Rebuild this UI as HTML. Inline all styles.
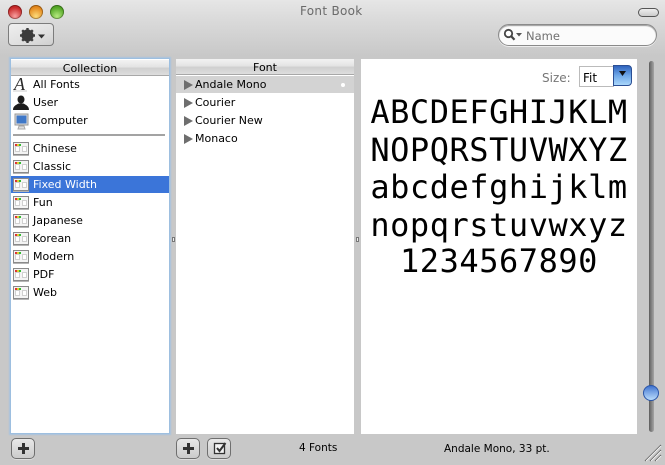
<!DOCTYPE html>
<html><head><meta charset="utf-8">
<style>
html{margin:0;padding:0;background:#c8c8c8}
body{margin:0;padding:0;position:relative;width:665px;height:465px;overflow:hidden;font-family:"DejaVu Sans","Liberation Sans",sans-serif;font-size:11px;color:#000;background:linear-gradient(#e6e6e6 0,#dadada 20px,#c8c8c8 56px,#c8c8c8 100%)}
.a{position:absolute}
.t{position:absolute;white-space:nowrap;line-height:14px}
.light{position:absolute;top:5px;width:14px;height:14px;border-radius:50%;box-shadow:inset 0 0 0 1px rgba(0,0,0,.3)}
.hd{position:absolute;height:15px;background:linear-gradient(#f2f2f2 0,#e4e4e4 45%,#cfcfcf 55%,#dedede 100%);border-bottom:1px solid #a8a8a8;text-align:center;line-height:17px;font-size:11px}
.btn{position:absolute;box-sizing:border-box;width:24px;height:21px;border:1px solid #6f6f6f;border-radius:5px;background:linear-gradient(#e8e8e8,#cbcbcb);box-shadow:0 1px 0 #ddd}
.row{position:absolute;left:33px;white-space:nowrap;line-height:14px}
.ic{position:absolute;left:13px;width:16px;height:13px;box-sizing:border-box;background:#f4f4f4;border:1px solid #8a8a8a;box-shadow:0 1px 0 #b5b5b5}
.ic i{position:absolute;top:1px;width:1.500px;height:1.500px}
.ic b{position:absolute;top:3px;width:3px;height:4px;background:#fff;border:1px solid #d0d0d0;box-sizing:content-box}
.tri{position:absolute;left:184px;width:0;height:0;border-left:9px solid #6e6e6e;border-top:5px solid transparent;border-bottom:5px solid transparent}
.s{position:absolute;left:361px;width:276px;text-align:center;font-family:"DejaVu Sans Mono","Liberation Mono",monospace;font-size:32px;line-height:38px;white-space:nowrap;letter-spacing:.53px}
</style></head><body>
<div class="light" style="left:8px;background:radial-gradient(circle at 50% 80%,#f8a0a0,#c92a2a 65%,#a81c1c)"></div>
<div class="light" style="left:29px;background:radial-gradient(circle at 50% 80%,#fcdb7a,#e58a1e 65%,#c46c10)"></div>
<div class="light" style="left:50px;background:radial-gradient(circle at 50% 80%,#b6ea80,#55a827 65%,#3f8a1a)"></div>
<div class="t" style="left:300px;top:4px;color:#6a6a6a;font-size:12px;letter-spacing:.3px">Font Book</div>
<div class="a" style="left:638px;top:8px;width:19px;height:7px;border:1px solid #555;border-radius:5px;background:linear-gradient(#eee,#ccc)"></div>

<div class="a" style="left:8px;top:23px;width:46px;height:23px;box-sizing:border-box;border:1px solid #7c7c7c;border-radius:4px;background:linear-gradient(160deg,#efefef 0,#e0e0e0 60%,#cfcfcf 100%)"></div>
<svg class="a" style="left:19px;top:27px" width="30" height="17" viewBox="0 0 30 17">
<circle cx="8.500" cy="8.500" r="4.500" fill="none" stroke="#3c3c3c" stroke-width="3.200"/>
<path d="M8.500 1v15M1 8.500h15M3.200 3.200l10.600 10.600M13.800 3.200L3.200 13.800" stroke="#3c3c3c" stroke-width="2.400"/>
<path d="M19 7.500h7l-3.500 4z" fill="#333"/></svg>

<div class="a" style="left:498px;top:24px;width:159px;height:22px;box-sizing:border-box;border-radius:11px;background:#fbfbfb;border:1px solid #8a8a8a;box-shadow:inset 0 1px 1px #999,0 1px 0 #eee"></div>
<svg class="a" style="left:503px;top:28px" width="20" height="14" viewBox="0 0 20 14">
<circle cx="5.500" cy="5.500" r="3.700" fill="#fff" stroke="#444" stroke-width="1.800"/>
<path d="M8 8l3.500 3.800" stroke="#444" stroke-width="2.200"/><path d="M13 5h6l-3 3.500z" fill="#555"/></svg>
<div class="t" style="left:526px;top:29px;color:#707070;font-size:11.500px">Name</div>

<!-- collection -->
<div class="a" style="left:10px;top:58px;width:160px;height:376px;box-sizing:border-box;background:#fff;border:1px solid #9dbfe0;box-shadow:0 0 1px 1px #a9c3de"></div>
<div class="hd" style="left:11px;top:60px;width:158px">Collection</div>
<svg class="a" style="left:12px;top:76px" width="19" height="17" viewBox="0 0 19 17"><text x="2" y="14" font-family="Liberation Serif,serif" font-style="italic" font-size="18" fill="#2a2a2a">A</text><path d="M1 15h14" stroke="#ccc"/></svg>
<div class="row" style="top:78px">All Fonts</div>
<svg class="a" style="left:13px;top:95px" width="16" height="15" viewBox="0 0 16 15"><ellipse cx="8" cy="4.500" rx="3.500" ry="4" fill="#1c1c1c"/><path d="M0 15c0-4 3-5 5.500-6.500h5C13 10 16 11 16 15z" fill="#1c1c1c"/></svg>
<div class="row" style="top:96px">User</div>
<svg class="a" style="left:14px;top:113px" width="16" height="17" viewBox="0 0 16 17"><rect x="1" y="1" width="13" height="11" fill="#dcdcdc" stroke="#999"/><rect x="2.500" y="2.500" width="10" height="8" fill="#3f78c8"/><path d="M5 13h5l1 3H4z" fill="#ddd" stroke="#aaa"/></svg>
<div class="row" style="top:114px">Computer</div>
<div class="a" style="left:13px;top:134px;width:152px;height:2px;background:#a3a3a3"></div>

<div class="ic" style="top:142px"><i style="left:1px;background:#d33"></i><i style="left:3px;background:#dc3"></i><i style="left:5px;background:#3b3"></i><b style="left:1px"></b><b style="left:8px"></b></div><div class="row" style="top:142px">Chinese</div>
<div class="ic" style="top:160px"><i style="left:1px;background:#d33"></i><i style="left:3px;background:#dc3"></i><i style="left:5px;background:#3b3"></i><b style="left:1px"></b><b style="left:8px"></b></div><div class="row" style="top:160px">Classic</div>
<div class="a" style="left:11px;top:176px;width:158px;height:17px;background:#3b75d9"></div>
<div class="ic" style="top:178px"><i style="left:1px;background:#d33"></i><i style="left:3px;background:#dc3"></i><i style="left:5px;background:#3b3"></i><b style="left:1px"></b><b style="left:8px"></b></div><div class="row" style="top:178px;color:#fff">Fixed Width</div>
<div class="ic" style="top:196px"><i style="left:1px;background:#d33"></i><i style="left:3px;background:#dc3"></i><i style="left:5px;background:#3b3"></i><b style="left:1px"></b><b style="left:8px"></b></div><div class="row" style="top:196px">Fun</div>
<div class="ic" style="top:214px"><i style="left:1px;background:#d33"></i><i style="left:3px;background:#dc3"></i><i style="left:5px;background:#3b3"></i><b style="left:1px"></b><b style="left:8px"></b></div><div class="row" style="top:214px">Japanese</div>
<div class="ic" style="top:232px"><i style="left:1px;background:#d33"></i><i style="left:3px;background:#dc3"></i><i style="left:5px;background:#3b3"></i><b style="left:1px"></b><b style="left:8px"></b></div><div class="row" style="top:232px">Korean</div>
<div class="ic" style="top:250px"><i style="left:1px;background:#d33"></i><i style="left:3px;background:#dc3"></i><i style="left:5px;background:#3b3"></i><b style="left:1px"></b><b style="left:8px"></b></div><div class="row" style="top:250px">Modern</div>
<div class="ic" style="top:268px"><i style="left:1px;background:#d33"></i><i style="left:3px;background:#dc3"></i><i style="left:5px;background:#3b3"></i><b style="left:1px"></b><b style="left:8px"></b></div><div class="row" style="top:268px">PDF</div>
<div class="ic" style="top:286px"><i style="left:1px;background:#d33"></i><i style="left:3px;background:#dc3"></i><i style="left:5px;background:#3b3"></i><b style="left:1px"></b><b style="left:8px"></b></div><div class="row" style="top:286px">Web</div>

<div class="a" style="left:172px;top:237px;width:3px;height:5px;background:#eee;border:1px solid #777;box-sizing:border-box"></div>
<div class="a" style="left:356px;top:237px;width:3px;height:5px;background:#eee;border:1px solid #777;box-sizing:border-box"></div>

<!-- font -->
<div class="a" style="left:176px;top:59px;width:178px;height:375px;background:#fff"></div>
<div class="hd" style="left:176px;top:59px;width:178px">Font</div>
<div class="a" style="left:176px;top:76px;width:178px;height:17px;background:#d3d3d3"></div>
<div class="a" style="left:341px;top:83px;width:4px;height:4px;border-radius:50%;background:#fff"></div>
<div class="tri" style="top:80px"></div><div class="t" style="left:195px;top:78px">Andale Mono</div>
<div class="tri" style="top:98px"></div><div class="t" style="left:195px;top:96px">Courier</div>
<div class="tri" style="top:116px"></div><div class="t" style="left:195px;top:114px">Courier New</div>
<div class="tri" style="top:134px"></div><div class="t" style="left:195px;top:132px">Monaco</div>

<!-- preview -->
<div class="a" style="left:361px;top:59px;width:276px;height:375px;background:#fff"></div>
<div class="t" style="left:542px;top:71px;color:#777;font-size:12px">Size:</div>
<div class="a" style="left:579px;top:66px;width:35px;height:21px;box-sizing:border-box;background:#fff;border:1px solid #bbb"></div>
<div class="t" style="left:583px;top:71px;font-size:12px">Fit</div>
<div class="a" style="left:613px;top:65px;width:19px;height:21px;box-sizing:border-box;border:1px solid #2b4f94;border-radius:0 4px 4px 0;background:linear-gradient(#2f63bd,#6fa8e8 50%,#a9d6fa)"></div>
<svg class="a" style="left:618px;top:71px" width="9" height="6"><path d="M1 0h7L4.500 5z" fill="#111"/></svg>
<div class="s" style="top:93px">ABCDEFGHIJKLM</div>
<div class="s" style="top:131px">NOPQRSTUVWXYZ</div>
<div class="s" style="top:168px">abcdefghijklm</div>
<div class="s" style="top:206px">nopqrstuvwxyz</div>
<div class="s" style="top:242px">1234567890</div>

<!-- slider -->
<div class="a" style="left:649px;top:61px;width:5px;height:371px;border-radius:3px;background:linear-gradient(90deg,#5d5d5d,#8a8a8a 60%,#a5a5a5)"></div>
<div class="a" style="left:643px;top:385px;width:16px;height:16px;box-sizing:border-box;border-radius:50%;border:1px solid #2a55a8;background:linear-gradient(#3f73cf 0,#7ba6e6 45%,#b9dcfb 100%)"></div>

<!-- bottom -->
<div class="btn" style="left:11px;top:438px"></div>
<svg class="a" style="left:17px;top:442px" width="13" height="13"><path d="M6.500 1v11M1 6.500h11" stroke="#333" stroke-width="3"/></svg>
<div class="btn" style="left:176px;top:438px"></div>
<svg class="a" style="left:182px;top:442px" width="13" height="13"><path d="M6.500 1v11M1 6.500h11" stroke="#333" stroke-width="3"/></svg>
<div class="btn" style="left:207px;top:438px"></div>
<svg class="a" style="left:213px;top:441px" width="14" height="14" viewBox="0 0 14 14"><rect x="1.500" y="2.500" width="10" height="10" fill="#f4f4f4" stroke="#333" stroke-width="1.300"/><path d="M4 7l2.500 3L12.500 2" fill="none" stroke="#333" stroke-width="2"/></svg>
<div class="t" style="left:299px;top:441px;font-size:10.500px">4 Fonts</div>
<div class="t" style="left:444px;top:442px;font-size:10.500px">Andale Mono, 33 pt.</div>
<svg class="a" style="left:644px;top:444px" width="18" height="18" viewBox="0 0 18 18"><path d="M1 17L17 1M6 17L17 6M11 17l6-6" stroke="#555" stroke-width="1"/><path d="M2 17L17 2M7 17L17 7M12 17l5-5" stroke="#eee" stroke-width="1"/></svg>
</body></html>
